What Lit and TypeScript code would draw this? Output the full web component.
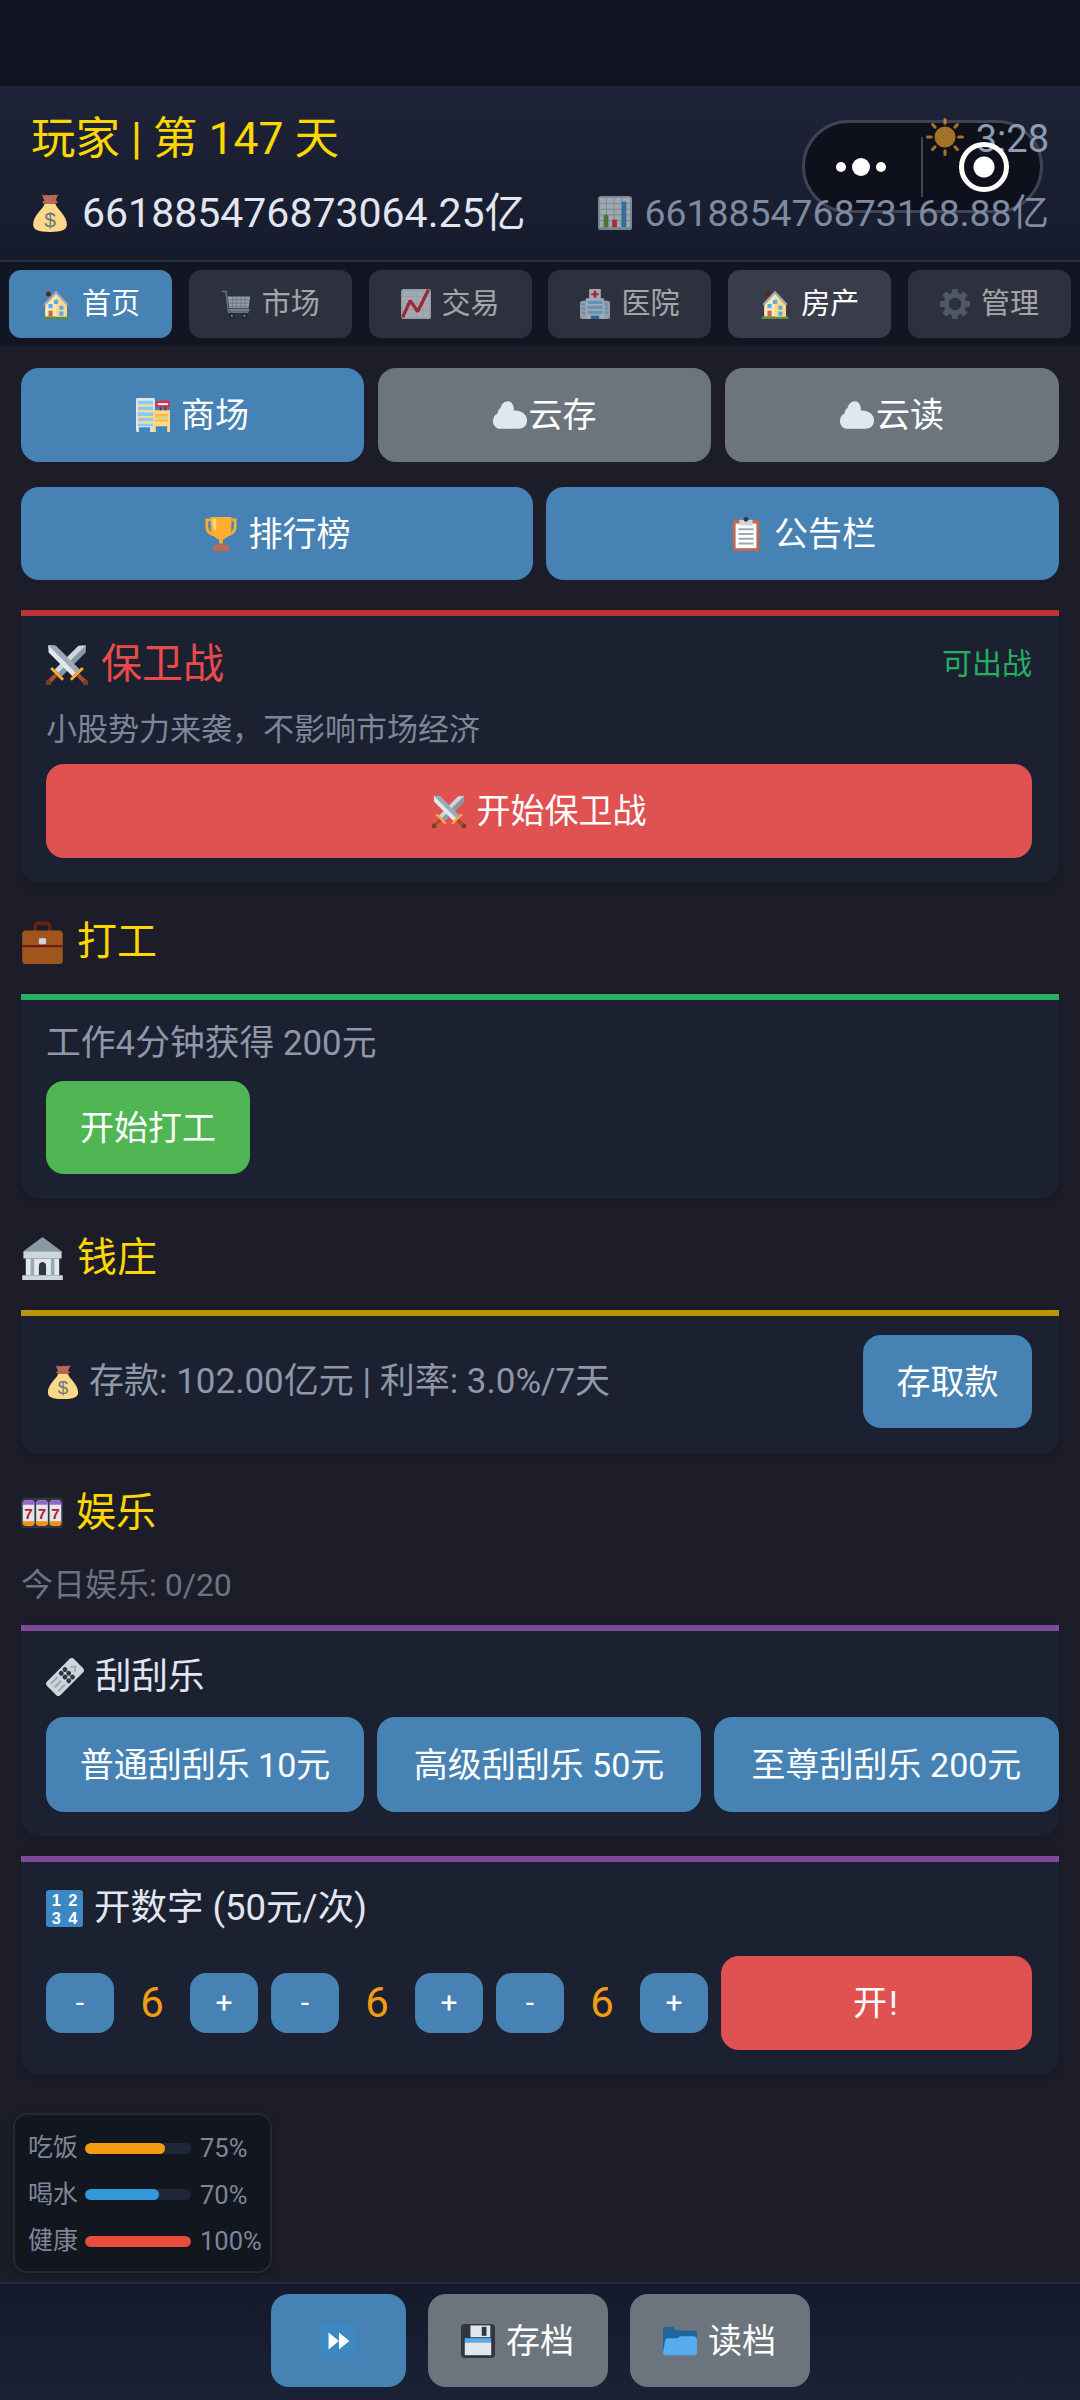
import { html, css, svg, LitElement } from "lit";
import { customElement } from "lit/decorators.js";

// twemoji-ish pictures, all on a 36 unit box
const sword = (blade: string, edge: string) => svg`
  <path fill="${blade}" d="M14.500 25V1l3.500-4 3.500 4v24z"/><path fill="${edge}" d="M18 25V-3l3.500 4v24z"/>
  <path fill="#FFAC33" d="M12 25h12v2H12z"/><path fill="#A0522D" d="M16.500 27h3v7h-3z"/><circle cx="18" cy="35" r="2.200" fill="#7A3E1D"/>`;

const crossed = (angle: number, blade: string, edge: string) =>
  svg`<g transform="translate(18 18) rotate(${angle}) scale(1.2) translate(-18 -16)">${sword(blade, edge)}</g>`;

const icons: Record<string, unknown> = {
  bag: svg`<path fill="#FDD888" d="M13 9h10c1 5 11 11 11 20 0 5-5 7-16 7S2 34 2 29c0-9 10-15 11-20z"/><path fill="#BF6952" d="M10 0c2 2 4 1 5 1s2 1 3 0 2 1 3 0 3 1 5-1l-3 7H13z"/><rect x="11" y="6.500" width="14" height="2.500" rx="1" fill="#BF6952"/><text x="18" y="31" font-size="20" text-anchor="middle" fill="#67757F" font-family="Liberation Sans">$</text>`,
  chart: svg`<rect width="36" height="36" rx="3" fill="#99AAB5"/><path fill="#CCD6DD" d="M2 2h32v31H2z"/><path stroke="#99AAB5" stroke-width="1" d="M2 8h32M2 14h32M2 20h32M2 26h32M9 2v31M17 2v31M25 2v31"/><path fill="#5C913B" d="M6 20h5v13H6z"/><path fill="#DD2E44" d="M15 25h5v8h-5z"/><path fill="#3B88C3" d="M25 6h5v27h-5z"/>`,
  house: svg`<path fill="#5C913B" d="M2 33h32v3H2z"/><path fill="#FFE8B6" d="M5 17 18 3l13 14v16H5z"/><circle cx="9" cy="6" r="3" fill="#662113"/><path fill="#FFD983" d="M18 9l13 9v15H18z"/><path fill="#99AAB5" d="M18 2 3 18l2 2L18 6l13 14 2-2z"/><path fill="#55ACEE" d="M22 20h5v5h-5zM22 27h5v5h-5zM15.500 13h5v5h-5z"/><path fill="#55ACEE" d="M9 18h5v5H9z"/><path fill="#C1694F" d="M9 26h5v7H9z"/>`,
  cart: svg`<path fill="none" stroke="#8899A6" stroke-width="1.800" d="M1 3h5l3 25h24"/><path fill="#CCD6DD" d="M8 9h27l-2 14H10z"/><path stroke="#8899A6" stroke-width="1" d="M9 13h25M10 17h23M10 21h23M14 9v14M19 9v14M24 9v14M29 9v14"/><path fill="#99AAB5" d="M10 24h24v3H10z"/><circle cx="13" cy="32" r="3.500" fill="#292F33"/><circle cx="28" cy="32" r="3.500" fill="#292F33"/><circle cx="13" cy="32" r="1" fill="#E1E8ED"/><circle cx="28" cy="32" r="1" fill="#E1E8ED"/>`,
  rise: svg`<rect width="36" height="36" rx="3" fill="#CCD6DD"/><path fill="#E1E8ED" d="M2 2h32v32H2z"/><path stroke="#CCD6DD" d="M2 9h32M2 17h32M2 25h32M11 2v32M19 2v32M27 2v32"/><path fill="none" stroke="#DD2E44" stroke-width="4" stroke-linejoin="bevel" d="M2 34l9-20 9 13L33 1"/>`,
  hospital: svg`<rect x="11" y="0" width="14" height="12" rx="1" fill="#E1E8ED"/><path fill="#DD2E44" d="M16.500 2h3v3h3v2.500h-3v3h-3v-3h-3V5h3z"/><rect x="0" y="14" width="36" height="22" rx="3" fill="#CCD6DD"/><rect x="7" y="11" width="22" height="25" rx="1" fill="#E1E8ED"/><path fill="#88C9F9" d="M9 14h18v4H9zM9 20h18v4H9zM9 26h18v4H9zM2 17h4v3H2zM2 22h4v3H2zM2 27h4v3H2zM30 17h4v3h-4zM30 22h4v3h-4zM30 27h4v3h-4z"/><path fill="#3B88C3" d="M13 32h10v4H13z"/>`,
  gear: svg`<g fill="#66757F"><circle cx="18" cy="18" r="10.500" fill="none" stroke="#66757F" stroke-width="6"/>${[0, 45, 90, 135, 180, 225, 270, 315].map(a => svg`<rect x="14.500" y="0" width="7" height="8" rx="1" transform="rotate(${a} 18 18)"/>`)}</g>`,
  store: svg`<rect x="0" y="0" width="20" height="36" rx="1.500" fill="#E1E8ED"/><path fill="#88C9F9" d="M2 3h16v4H2zM2 9h16v4H2zM2 15h16v4H2zM2 21h16v4H2zM2 27h16v3H2z"/><path fill="#FFD983" d="M2 7h16v2H2zM2 13h16v2H2zM2 19h16v2H2zM2 25h16v2H2z"/><path fill="#FFD983" d="M18 13h18v23H18z"/><path fill="#FFAC33" d="M20 17h14v1.500H20zM20 23h14v1.500H20z"/><path fill="#A6D388" d="M20 19h14v3H20z" opacity=".5"/><path fill="#3B88C3" d="M3 31h12v5H3zM21 30h12v6H21z"/><path stroke="#31373D" stroke-width="1.500" d="M26 9v4M31 9v4"/><rect x="21" y="3" width="15" height="7" rx="2" fill="#DD2E44"/><path fill="#fff" d="M23 5.500h11v2H23z"/>`,
  cloud: svg`<path fill="#E1E8ED" d="M16 3.500c3 0 5.500 3 6 7 0 1 0 2 0 3 6-1 14 3 14 10 0 6-4 9-9 9H8c-5 0-8-4-8-8 0-4 2-7 5-8 0-3 1-5 3-6 1-4 4-7 8-7z"/>`,
  trophy: svg`<path fill="none" stroke="#FFAC33" stroke-width="3" d="M8 3H3v7c0 6 5 9 9 9M28 3h5v7c0 6-5 9-9 9"/><path fill="#FFAC33" d="M7 0h22v12c0 7-6 11-9 12v4h-4v-4c-3-1-9-5-9-12z"/><path fill="#FFD983" d="M9 2h4v13c-3-3-4-6-4-9z"/><path fill="#C1694F" d="M11 29h14v3H11zM9 32h18v4H9z"/>`,
  clip: svg`<rect x="4" y="3" width="28" height="33" rx="3" fill="#C1694F"/><path fill="#fff" d="M7 7h22v26H7z"/><path fill="#CCD6DD" d="M11 3h14v6H11z"/><circle cx="18" cy="2.500" r="2.500" fill="#31373D"/><path stroke="#99AAB5" stroke-width="2" d="M10 13h16M10 18h16M10 23h16M10 28h16"/>`,
  swords: svg`${crossed(45, "#CCD6DD", "#8899A6")}${crossed(-45, "#E1E8ED", "#99AAB5")}`,
  brief: svg`<path fill="none" stroke="#662113" stroke-width="3" d="M12 9V4c0-1 1-2 2-2h8c1 0 2 1 2 2v5"/><rect x="1" y="8" width="34" height="28" rx="3" fill="#A0551F"/><path fill="#662113" d="M1 20h34v2H1z"/><rect x="15" y="14.500" width="6" height="5" rx="1" fill="#CCD6DD"/>`,
  bank: svg`<path fill="#8899A6" d="M18 0 2 12h32z"/><path fill="#CCD6DD" d="M2 12h32v6H2z"/><path fill="#E1E8ED" d="M4 18h28v14H4z"/><path fill="#99AAB5" d="M8 18h3v14H8zM25 18h3v14h-3z"/><path fill="#31373D" d="M15 32v-8c0-4 6-4 6 0v8z"/><path fill="#CCD6DD" d="M1 32h34v4H1z"/>`,
  slot: svg`<rect x="0" y="5" width="36" height="26" rx="3" fill="#31373D"/>${[1.5, 13, 24.5].map(x => svg`<rect x="${x}" y="7" width="10" height="22" rx="3" fill="#E1E8ED"/><path fill="#9266CC" d="M${x} 11v-1a3 3 0 0 1 3-3h4a3 3 0 0 1 3 3v1z"/><path fill="#F4900C" d="M${x} 25h10v1a3 3 0 0 1-3 3h-4a3 3 0 0 1-3-3z"/><text x="${x + 5}" y="23.500" font-size="13" font-weight="700" text-anchor="middle" fill="#BE1931" font-family="Liberation Sans">7</text>`)}`,
  ticket: svg`<g transform="rotate(45 18 18)"><rect x="9" y="0" width="18" height="36" rx="3" fill="#CCD6DD"/><path stroke="#99AAB5" stroke-width="1.500" fill="none" d="M15 8l3-4 3 4"/><g fill="#31373D"><circle cx="13" cy="13" r="2.300"/><circle cx="18" cy="13" r="2.300"/><circle cx="23" cy="13" r="2.300"/><circle cx="13" cy="18" r="2.300"/><circle cx="18" cy="18" r="2.300"/><circle cx="23" cy="18" r="2.300"/></g><path stroke="#99AAB5" stroke-width="2" d="M13 23v9M18 23v9M23 23v9"/></g>`,
  nums: svg`<rect width="36" height="36" rx="3" fill="#3B88C3"/><g font-size="16" font-weight="700" fill="#fff" text-anchor="middle" font-family="Liberation Sans"><text x="10" y="16">1</text><text x="26" y="16">2</text><text x="10" y="33">3</text><text x="26" y="33">4</text></g>`,
  ff: svg`<rect width="36" height="36" rx="3" fill="#3B88C3"/><path fill="#fff" d="M8 9l11 9-11 9zM19 9l11 9-11 9z"/>`,
  floppy: svg`<rect width="36" height="36" rx="4" fill="#31373D"/><path fill="#E1E8ED" d="M10 1.500h21v12.500H10z"/><path fill="#31373D" d="M22 3h5v9.500h-5z"/><path fill="#55ACEE" d="M4 15h28v4.500H4z"/><path fill="#E1E8ED" d="M4 19.500h28V33H4z"/>`,
  folder: svg`<path fill="#226699" d="M0 6a3 3 0 0 1 3-3h6c2 0 3 1 5 4h19a3 3 0 0 1 3 3v20H0z"/><path fill="#55ACEE" d="M3 33a3 3 0 0 1-3-3l2-11a4 4 0 0 1 4-4h9c2 0 2-2 4-2h13a4 4 0 0 1 4 4v13a3 3 0 0 1-3 3z"/>`,
  sun: svg`<circle cx="18" cy="18" r="10" fill="#FFAC33"/><path stroke="#FFAC33" stroke-width="3" stroke-linecap="round" d="M18 1.500v3.500M18 31v3.500M1.500 18H5M31 18h3.500M6.300 6.300l2.300 2.300M27.400 27.400l2.300 2.300M6.300 29.700l2.300-2.300M27.400 8.600l2.300-2.300"/>`,
};

const ico = (name: string, size = 36) =>
  html`<svg class="ico" width="${size}" height="${size}" viewBox="0 0 36 36">${icons[name]}</svg>`;

const tabs = [
  ["house", "首页", "active"],
  ["cart", "市场", "dim"],
  ["rise", "交易", "dim"],
  ["hospital", "医院", "dim"],
  ["house", "房产", ""],
  ["gear", "管理", "dim"],
];

const stats = [
  ["吃饭", 75, "#f39c12"],
  ["喝水", 70, "#3498db"],
  ["健康", 100, "#e74c3c"],
];

@customElement("app-root")
export class AppRoot extends LitElement {
  static styles = css`
    :host {
      display: flex;
      flex-direction: column;
      position: relative;
      width: 1080px;
      min-height: 2400px;
      background: #1c1d29;
      color: #e2e6f0;
      font-family: "Roboto", "Noto Sans CJK SC", sans-serif;
      font-size: 34px;
      line-height: 40px;
    }
    * { box-sizing: border-box; }
    .ico { flex: none; display: block; }

    .status { height: 86px; background: #111522; }
    .header {
      position: relative;
      height: 176px;
      padding: 30px 31px 0;
      background: linear-gradient(#1e2339, #161b2c);
      border-bottom: 2px solid #2a3040;
    }
    .capsule-back, .capsule-front {
      position: absolute;
      left: 802px;
      top: 34px;
      width: 241px;
      height: 93px;
      border-radius: 47px;
    }
    .capsule-back {
      background: #0e111c;
      border: 3px solid #3f4352;
    }
    .capsule-front {
      display: flex;
      align-items: center;
      z-index: 2;
    }
    .dots { display: flex; align-items: center; gap: 6px; margin-left: 34px; }
    .dots i { width: 10px; height: 10px; border-radius: 50%; background: #fff; }
    .dots i.big { width: 18px; height: 18px; }
    .sep { width: 2px; height: 60px; margin-left: 35px; background: #3f4352; }
    .rec {
      width: 50px;
      height: 50px;
      margin-left: 36px;
      border: 5px solid #fff;
      border-radius: 50%;
      background: radial-gradient(circle, #fff 0 10px, transparent 11px);
    }
    .row { position: relative; display: flex; align-items: center; justify-content: space-between; }
    .row.top { height: 46px; }
    .row.money { height: 50px; margin-top: 26px; }
    .player { color: #ffd700; font-size: 44.500px; line-height: 46px; }
    .clock { display: flex; align-items: center; gap: 12px; font-size: 38px; color: #8f9bb3; }
    .clock .ico { opacity: .62; margin-top: -4px; }
    .cash { display: flex; align-items: center; gap: 13px; font-size: 41px; }
    .cash.asset { color: #7f8ba0; font-size: 37.400px; }
    .cash.asset .ico { opacity: .75; }

    .nav {
      display: flex;
      justify-content: space-between;
      height: 84px;
      padding: 8px 9px;
      background: #121622;
    }
    .tab {
      display: flex;
      align-items: center;
      justify-content: center;
      gap: 11px;
      width: 163px;
      height: 68px;
      border-radius: 12px;
      background: #393d4b;
      font-size: 29px;
      color: #fff;
    }
    .tab.active { background: #4682b4; }
    .tab.dim { opacity: .7; color: #e2e2e2; }

    .main { flex: 1; padding: 22px 21px 0; }
    .btn {
      display: flex;
      align-items: center;
      justify-content: center;
      gap: 11px;
      border-radius: 18px;
      color: #fff;
      background: #4682b4;
      white-space: nowrap;
    }
    .btn.grey { background: #6c757d; }
    .btn.red { background: #e05151; }
    .btn.green { background: #4fb653; }
    .btn.tight { gap: 2px; }
    .grid { display: grid; }
    .grid.three { grid-template-columns: 343fr 333fr 334fr; gap: 14px; height: 94px; }
    .grid.two { grid-template-columns: 512px 513px; gap: 13px; height: 93px; margin-top: 25px; }

    .card {
      padding: 25px;
      background: #1b2131;
      border-top: 6px solid;
      border-radius: 0 0 18px 18px;
      box-shadow: 0 3px 8px rgba(0, 0, 0, .18);
    }
    .card.red { border-color: #c13232; margin-top: 30px; padding: 20px 27px 25px 25px; }
    .card.green { border-color: #27ae60; }
    .card.gold { border-color: #b8960c; }
    .card.purple { border-color: #7d4a9a; }
    .card-top { display: flex; align-items: center; justify-content: space-between; height: 56px; }
    .raid { display: flex; align-items: center; gap: 13px; font-size: 41px; color: #e94b4b; }
    .ready { font-size: 30px; color: #27ae60; }
    .muted { color: #7e8799; font-size: 31px; }
    .desc { margin-top: 18px; height: 40px; }
    .wide { height: 94px; margin-top: 14px; }

    .title {
      display: flex;
      align-items: center;
      gap: 13px;
      height: 56px;
      margin: 31px 0 24px;
      font-size: 40px;
      color: #ffd700;
    }
    .work-text { font-size: 34.800px; color: #8f97a8; height: 40px; margin-top: -2px; }
    .work-btn { width: 204px; height: 93px; margin-top: 18px; }
    .bank { display: flex; align-items: center; justify-content: space-between; padding: 19px 27px 26px 25px; }
    .bank-text { display: flex; align-items: center; gap: 9px; font-size: 35px; color: #8f97a8; }
    .bank-btn { width: 169px; height: 93px; }
    .today { font-size: 32px; color: #6c7484; height: 40px; margin-top: 1px; margin-bottom: 20px; }
    .game { padding: 26px 1px 24px 25px; }
    .game-title { display: flex; align-items: center; gap: 11px; height: 40px; font-size: 36.500px; }
    .tickets { display: grid; grid-template-columns: 318px 324px 345px; gap: 13px; height: 95px; margin-top: 20px; }
    .game + .game { margin-top: 20px; }
    .picker { display: flex; align-items: center; gap: 13px; margin-top: 28px; padding-right: 26px; }
    .digit { display: flex; align-items: center; justify-content: space-between; width: 212px; }
    .step { width: 68px; height: 60px; border-radius: 16px; font-size: 30px; }
    .digit b { font-weight: 400; font-size: 42px; color: #f39c12; }
    .open { width: 311px; height: 94px; letter-spacing: 2px; }

    .stats {
      position: absolute;
      left: 13px;
      top: 2113px;
      width: 259px;
      height: 160px;
      padding: 10px 0 0 13px;
      background: #12161f;
      border: 2px solid #222838;
      border-radius: 14px;
      box-shadow: 0 3px 10px rgba(0, 0, 0, .25);
      color: #7e8799;
      font-size: 25px;
    }
    .stat { display: flex; align-items: center; height: 46.500px; white-space: nowrap; }
    .stat .name { width: 57px; }
    .track { width: 106px; height: 11px; border-radius: 6px; background: #1f2636; overflow: hidden; }
    .fill { height: 100%; border-radius: 6px; }
    .stat .val { margin-left: 9px; font-size: 25.500px; }

    .footer {
      display: flex;
      justify-content: center;
      gap: 22px;
      height: 118px;
      padding-top: 10px;
      background: linear-gradient(#141a2b, #1c2236);
      border-top: 2px solid #252b3c;
    }
    .footer .btn { width: 180px; height: 93px; }
    .footer .btn.ff { width: 135px; }
  `;

  render() {
    return html`
      <div class="status"></div>
      <div class="header">
        <div class="capsule-back"></div>
        <div class="row top">
          <div class="player">玩家 | 第 147 天</div>
          <div class="clock">${ico("sun", 38)}<span>3:28</span></div>
        </div>
        <div class="row money">
          <div class="cash">${ico("bag", 38)}<span>661885476873064.25亿</span></div>
          <div class="cash asset">${ico("chart", 34)}<span>661885476873168.88亿</span></div>
        </div>
        <div class="capsule-front">
          <div class="dots"><i></i><i class="big"></i><i></i></div>
          <div class="sep"></div>
          <div class="rec"></div>
        </div>
      </div>
      <div class="nav">
        ${tabs.map(
          ([icon, label, cls]) => html`<div class="tab ${cls}">${ico(icon, 30)}<span>${label}</span></div>`
        )}
      </div>
      <div class="main">
        <div class="grid three">
          <div class="btn">${ico("store", 34)}<span>商场</span></div>
          <div class="btn grey tight">${ico("cloud", 34)}<span>云存</span></div>
          <div class="btn grey tight">${ico("cloud", 34)}<span>云读</span></div>
        </div>
        <div class="grid two">
          <div class="btn">${ico("trophy", 34)}<span>排行榜</span></div>
          <div class="btn">${ico("clip", 34)}<span>公告栏</span></div>
        </div>

        <div class="card red">
          <div class="card-top">
            <div class="raid">${ico("swords", 42)}<span>保卫战</span></div>
            <div class="ready">可出战</div>
          </div>
          <div class="muted desc">小股势力来袭，不影响市场经济</div>
          <div class="btn red wide">${ico("swords", 34)}<span>开始保卫战</span></div>
        </div>

        <div class="title">${ico("brief", 43)}<span>打工</span></div>
        <div class="card green">
          <div class="work-text">工作4分钟获得 200元</div>
          <div class="btn green work-btn">开始打工</div>
        </div>

        <div class="title">${ico("bank", 43)}<span>钱庄</span></div>
        <div class="card gold bank">
          <div class="bank-text">${ico("bag", 34)}<span>存款: 102.00亿元 | 利率: 3.0%/7天</span></div>
          <div class="btn bank-btn">存取款</div>
        </div>

        <div class="title">${ico("slot", 42)}<span>娱乐</span></div>
        <div class="today">今日娱乐: 0/20</div>
        <div class="card purple game">
          <div class="game-title">${ico("ticket", 38)}<span>刮刮乐</span></div>
          <div class="tickets">
            <div class="btn">普通刮刮乐 10元</div>
            <div class="btn">高级刮刮乐 50元</div>
            <div class="btn">至尊刮刮乐 200元</div>
          </div>
        </div>
        <div class="card purple game">
          <div class="game-title">${ico("nums", 37)}<span>开数字 (50元/次)</span></div>
          <div class="picker">
            ${[0, 1, 2].map(
              () => html`<div class="digit"><div class="btn step">-</div><b>6</b><div class="btn step">+</div></div>`
            )}
            <div class="btn red open">开!</div>
          </div>
        </div>
      </div>

      <div class="stats">
        ${stats.map(
          ([name, pct, color]) => html`<div class="stat">
            <span class="name">${name}</span>
            <div class="track"><div class="fill" style="width:${pct}%;background:${color}"></div></div>
            <span class="val">${pct}%</span>
          </div>`
        )}
      </div>

      <div class="footer">
        <div class="btn ff">${ico("ff", 34)}</div>
        <div class="btn grey">${ico("floppy", 34)}<span>存档</span></div>
        <div class="btn grey">${ico("folder", 34)}<span>读档</span></div>
      </div>
    `;
  }
}
